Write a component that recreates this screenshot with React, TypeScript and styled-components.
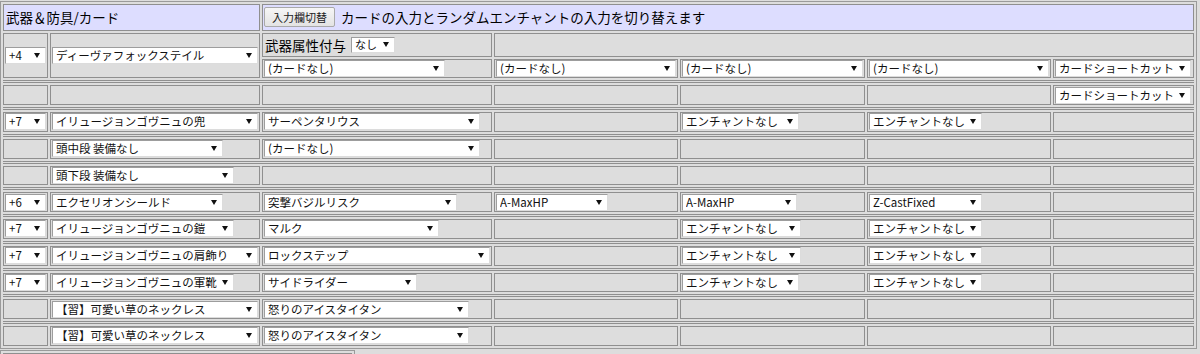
import React from "react";
import styled, { createGlobalStyle } from "styled-components";

type Sel = { t: string; w: number } | null;

const GlobalStyle = createGlobalStyle`
  html, body {
    margin: 0;
    padding: 0;
    background: #dddddd;
  }
  body {
    font-family: "Noto Sans CJK JP", "Noto Sans", sans-serif;
    color: #000;
  }
`;

const Frame = styled.div`
  margin-top: 1px;
  width: 1197px;
  box-sizing: border-box;
  border: 1px solid #9a9a9a;
  padding: 2px;
  display: grid;
  grid-template-columns: 45px 210px 230px 184px 185px 184px 141px;
  grid-template-rows: 26.5px 24px 19.75px repeat(10, 3px 19.75px);
  gap: 2px;
`;

const Cell = styled.div<{ $span?: number; $rows?: number; $head?: boolean }>`
  box-sizing: border-box;
  grid-column: span ${(p) => p.$span ?? 1};
  grid-row: span ${(p) => p.$rows ?? 1};
  min-width: 0;
  border: 1px solid #8f8f8f;
  background: ${(p) => (p.$head ? "#ddddff" : "#dddddd")};
  padding: 0 1px;
  display: flex;
  align-items: center;
  white-space: nowrap;
  overflow: hidden;
`;

const Sep = styled.div`
  grid-column: 1 / -1;
  box-sizing: border-box;
  border-top: 1px solid #8f8f8f;
  border-bottom: 1px solid #8f8f8f;
`;

const Label = styled.span<{ $gap?: number }>`
  font-size: 13.5px;
  line-height: 18px;
  padding-left: 1px;
  margin-right: ${(p) => p.$gap ?? 0}px;
`;

const SwitchButton = styled.button`
  height: 20px;
  padding: 0 7px;
  margin-right: 5px;
  font-family: "Noto Sans CJK JP", sans-serif;
  font-size: 11px;
  color: #222;
  border: 1px solid #a9a9a9;
  border-radius: 2px;
  background: linear-gradient(#f6f6f6, #e3e3e3);
`;

const SelectBox = styled.div<{ $w: number; $small?: boolean }>`
  box-sizing: border-box;
  width: ${(p) => p.$w}px;
  height: ${(p) => (p.$small ? 16 : 17)}px;
  flex: none;
  display: flex;
  align-items: center;
  padding-left: 3px;
  background: #fff;
  border: 1px solid;
  border-color: #9d9d9d #dcdcdc #dcdcdc #9d9d9d;
  font-size: ${(p) => (p.$small ? 11 : 11.5)}px;
  color: #111;
`;

const SelectText = styled.span`
  flex: 1;
  min-width: 0;
  overflow: hidden;
  line-height: 15px;
`;

const Arrow = styled.span`
  flex: none;
  width: 0;
  height: 0;
  margin: 0 5px 0 2px;
  border-left: 3px solid transparent;
  border-right: 3px solid transparent;
  border-top: 5px solid #111;
`;

const NextFrame = styled.div`
  margin-top: 1px;
  width: 355px;
  height: 4px;
  box-sizing: border-box;
  border: 1px solid #9a9a9a;
  border-bottom: 0;
  padding: 2px 2px 0;
`;

const NextCell = styled.div`
  height: 100%;
  box-sizing: border-box;
  border-top: 1px solid #8f8f8f;
`;

function Select({ t, w, small }: { t: string; w: number; small?: boolean }) {
  return (
    <SelectBox $w={w} $small={small}>
      <SelectText>{t}</SelectText>
      <Arrow />
    </SelectBox>
  );
}

const ench = (w: number): Sel => ({ t: "エンチャントなし", w });
const neck: Sel[] = [
  null,
  { t: "【習】可愛い草のネックレス", w: 206 },
  { t: "怒りのアイスタイタン", w: 205 },
  null,
  null,
  null,
  null,
];

const rows: Sel[][] = [
  [null, null, null, null, null, null, { t: "カードショートカット", w: 136 }],
  [
    { t: "+7", w: 41 },
    { t: "イリュージョンゴヴニュの兜", w: 206 },
    { t: "サーペンタリウス", w: 216 },
    null,
    ench(117),
    ench(113),
    null,
  ],
  [null, { t: "頭中段 装備なし", w: 171 }, { t: "(カードなし)", w: 216 }, null, null, null, null],
  [null, { t: "頭下段 装備なし", w: 182 }, null, null, null, null, null],
  [
    { t: "+6", w: 41 },
    { t: "エクセリオンシールド", w: 171 },
    { t: "突撃バジルリスク", w: 193 },
    { t: "A-MaxHP", w: 112 },
    { t: "A-MaxHP", w: 115 },
    { t: "Z-CastFixed", w: 113 },
    null,
  ],
  [
    { t: "+7", w: 41 },
    { t: "イリュージョンゴヴニュの鎧", w: 182 },
    { t: "マルク", w: 175 },
    null,
    ench(119),
    ench(113),
    null,
  ],
  [
    { t: "+7", w: 41 },
    { t: "イリュージョンゴヴニュの肩飾り", w: 206 },
    { t: "ロックステップ", w: 226 },
    null,
    ench(119),
    ench(113),
    null,
  ],
  [
    { t: "+7", w: 41 },
    { t: "イリュージョンゴヴニュの軍靴", w: 182 },
    { t: "サイドライダー", w: 153 },
    null,
    ench(117),
    ench(113),
    null,
  ],
  neck,
  neck,
];

export default function App() {
  return (
    <>
      <GlobalStyle />
      <Frame>
        <Cell $span={2} $head>
          <Label>武器＆防具/カード</Label>
        </Cell>
        <Cell $span={5} $head>
          <SwitchButton>入力欄切替</SwitchButton>
          <Label>カードの入力とランダムエンチャントの入力を切り替えます</Label>
        </Cell>

        <Cell $rows={2}>
          <Select t="+4" w={41} />
        </Cell>
        <Cell $rows={2}>
          <Select t="ディーヴァフォックステイル" w={206} />
        </Cell>
        <Cell>
          <Label $gap={5}>武器属性付与</Label>
          <Select t="なし" w={44} small />
        </Cell>
        <Cell $span={4} />
        <Cell>
          <Select t="(カードなし)" w={181} />
        </Cell>
        <Cell>
          <Select t="(カードなし)" w={180} />
        </Cell>
        <Cell>
          <Select t="(カードなし)" w={181} />
        </Cell>
        <Cell>
          <Select t="(カードなし)" w={180} />
        </Cell>
        <Cell>
          <Select t="カードショートカット" w={136} />
        </Cell>

        {rows.map((row, i) => (
          <React.Fragment key={i}>
            <Sep />
            {row.map((s, j) => (
              <Cell key={j}>{s && <Select t={s.t} w={s.w} />}</Cell>
            ))}
          </React.Fragment>
        ))}
      </Frame>
      <NextFrame>
        <NextCell />
      </NextFrame>
    </>
  );
}
